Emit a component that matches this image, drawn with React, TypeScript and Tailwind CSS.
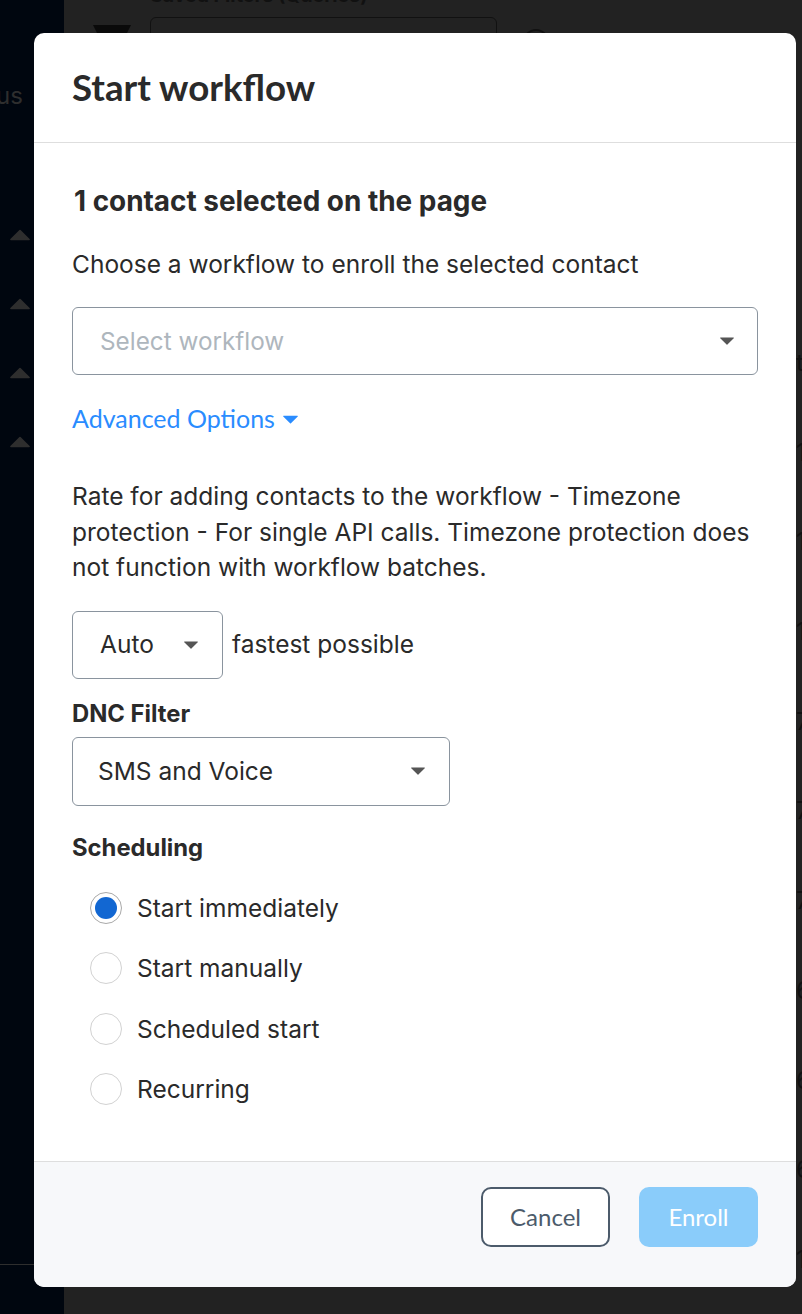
import React from "react";

const lato = "font-['Lato',sans-serif]";

function Caret({ className }: { className: string }) {
  return (
    <svg viewBox="0 0 14 8" className={className} fill="currentColor">
      <path d="M0.6 0.4h12.8a.5.5 0 0 1 .36.85L7.4 7.5a.55.55 0 0 1-.8 0L.24 1.25A.5.5 0 0 1 .6.4z" />
    </svg>
  );
}

function Radio({ label, checked }: { label: string; checked?: boolean }) {
  return (
    <label className="flex h-8 items-center gap-[15px]">
      <span
        className={`flex h-8 w-8 items-center justify-center rounded-full border bg-white ${
          checked ? "border-[#a9a9a9]" : "border-[#d2d2d2]"
        }`}
      >
        {checked && <span className="h-[22px] w-[22px] rounded-full bg-[#1267d2]" />}
      </span>
      <span className="text-[24.5px] leading-8 text-[#2a2a2a]">{label}</span>
    </label>
  );
}

const edgeRows = ["t", "1", "1", "1", "7", "7", "7", "6", "6", "6", "1"];

export default function App() {
  return (
    <div className="relative flex h-[1314px] w-[802px] overflow-hidden bg-[#222222] font-['Inter',sans-serif]">
      {/* Page behind the modal */}
      <aside className="flex h-full w-16 shrink-0 flex-col overflow-hidden bg-[#00060f] text-[#2e2e2e]">
        <div className="mt-[81px] -ml-[4px] text-[24px] leading-[30px] whitespace-nowrap">us</div>
        <div className="mt-[118px] flex flex-col gap-[57px] pl-[10px]">
          {[0, 1, 2, 3].map((i) => (
            <Caret key={i} className="h-[12px] w-[20px] rotate-180" />
          ))}
        </div>
        <div className="mt-auto mb-[49px] h-px w-full bg-[#2e2e2e]" />
      </aside>
      <main className="flex min-w-0 flex-1">
        <div className="min-w-0 flex-1">
          <div className="ml-[86px] h-[17px] overflow-hidden">
            <div className="-mt-[18px] text-[19.5px] leading-[26px] font-bold whitespace-nowrap text-[#111111]">
              Saved Filters (Queries)
            </div>
          </div>
          <div className="flex">
            <svg viewBox="0 0 38 12" className="mt-[8px] ml-[29px] h-[12px] w-[38px] text-[#0a0a0a]" fill="currentColor">
              <path d="M0 0h38l-6 12H6z" />
            </svg>
            <div className="ml-[19px] h-[60px] w-[347px] rounded-md border border-[#111111]" />
            <div className="mt-[12px] ml-[26px] h-[26px] w-[26px] rounded-full border-2 border-[#111111]" />
          </div>
        </div>
        <div className="w-[6px] shrink-0 overflow-hidden pt-[348px] text-[24px] leading-[30px] text-[#111111]">
          <div className="flex flex-col gap-[59.7px]">
            {edgeRows.map((c, i) => (
              <span key={i}>{c}</span>
            ))}
          </div>
        </div>
      </main>

      {/* Modal */}
      <div className="absolute top-[33px] left-[34px] flex h-[1254px] w-[762px] flex-col overflow-hidden rounded-[10px] bg-white text-[#2a2a2a]">
        <header className="flex h-[110px] shrink-0 items-center border-b border-[#dedede] pl-[38px]">
          <h2 className={`${lato} text-[36.7px] leading-none font-bold text-[#2a2a2a]`}>Start workflow</h2>
        </header>

        <div className="flex flex-1 flex-col px-[38px]">
          <h3 className="mt-[42px] pl-[2px] text-[27.9px] leading-8 font-bold">1 contact selected on the page</h3>
          <p className="mt-[31px] text-[24.5px] leading-8">Choose a workflow to enroll the selected contact</p>

          <div className="mt-[27px] flex h-[68px] w-[686px] items-center justify-between rounded-md border border-[#8a949e] pr-[23px] pl-[27px]">
            <span className="text-[24.3px] text-[#aeb6bd]">Select workflow</span>
            <Caret className="h-[8px] w-[14px] text-[#555555]" />
          </div>

          <button className={`${lato} mt-[28px] flex h-8 items-center gap-2 text-[25px] text-[#2a8cff]`}>
            Advanced Options
            <Caret className="h-[9px] w-[15px]" />
          </button>

          <p className="mt-[44px] text-[24.5px] leading-[35.5px] whitespace-nowrap">
            Rate for adding contacts to the workflow - Timezone
            <br />
            protection - For single API calls. Timezone protection does
            <br />
            not function with workflow batches.
          </p>

          <div className="mt-[25px] flex items-center gap-[9px]">
            <div className="flex h-[68px] w-[151px] items-center justify-between rounded-md border border-[#8a949e] pr-[24px] pl-[27px]">
              <span className="text-[24.5px]">Auto</span>
              <Caret className="h-[8px] w-[14px] text-[#555555]" />
            </div>
            <span className="text-[24.5px]">fastest possible</span>
          </div>

          <div className="mt-[19px] text-[23.8px] leading-8 font-bold">DNC Filter</div>
          <div className="mt-[7px] flex h-[69px] w-[378px] items-center justify-between rounded-md border border-[#8a949e] pr-[24px] pl-[25px]">
            <span className="text-[24.5px]">SMS and Voice</span>
            <Caret className="h-[8px] w-[14px] text-[#555555]" />
          </div>

          <div className="mt-[26px] text-[23.8px] leading-8 font-bold">Scheduling</div>

          <div className="mt-[28px] flex flex-col gap-[28.5px] pl-[18px]">
            <Radio label="Start immediately" checked />
            <Radio label="Start manually" />
            <Radio label="Scheduled start" />
            <Radio label="Recurring" />
          </div>
        </div>

        <footer className="flex h-[126px] shrink-0 items-start justify-end gap-[29px] border-t border-[#dedede] bg-[#f7f8fa] pt-[25px] pr-[38px]">
          <button className={`${lato} h-[60px] w-[129px] rounded-[10px] border-2 border-[#4c5b6b] bg-white text-[24px] text-[#4c5b6b]`}>
            Cancel
          </button>
          <button className={`${lato} h-[60px] w-[119px] rounded-[10px] bg-[#8accfa] text-[24px] text-white`}>
            Enroll
          </button>
        </footer>
      </div>
    </div>
  );
}
